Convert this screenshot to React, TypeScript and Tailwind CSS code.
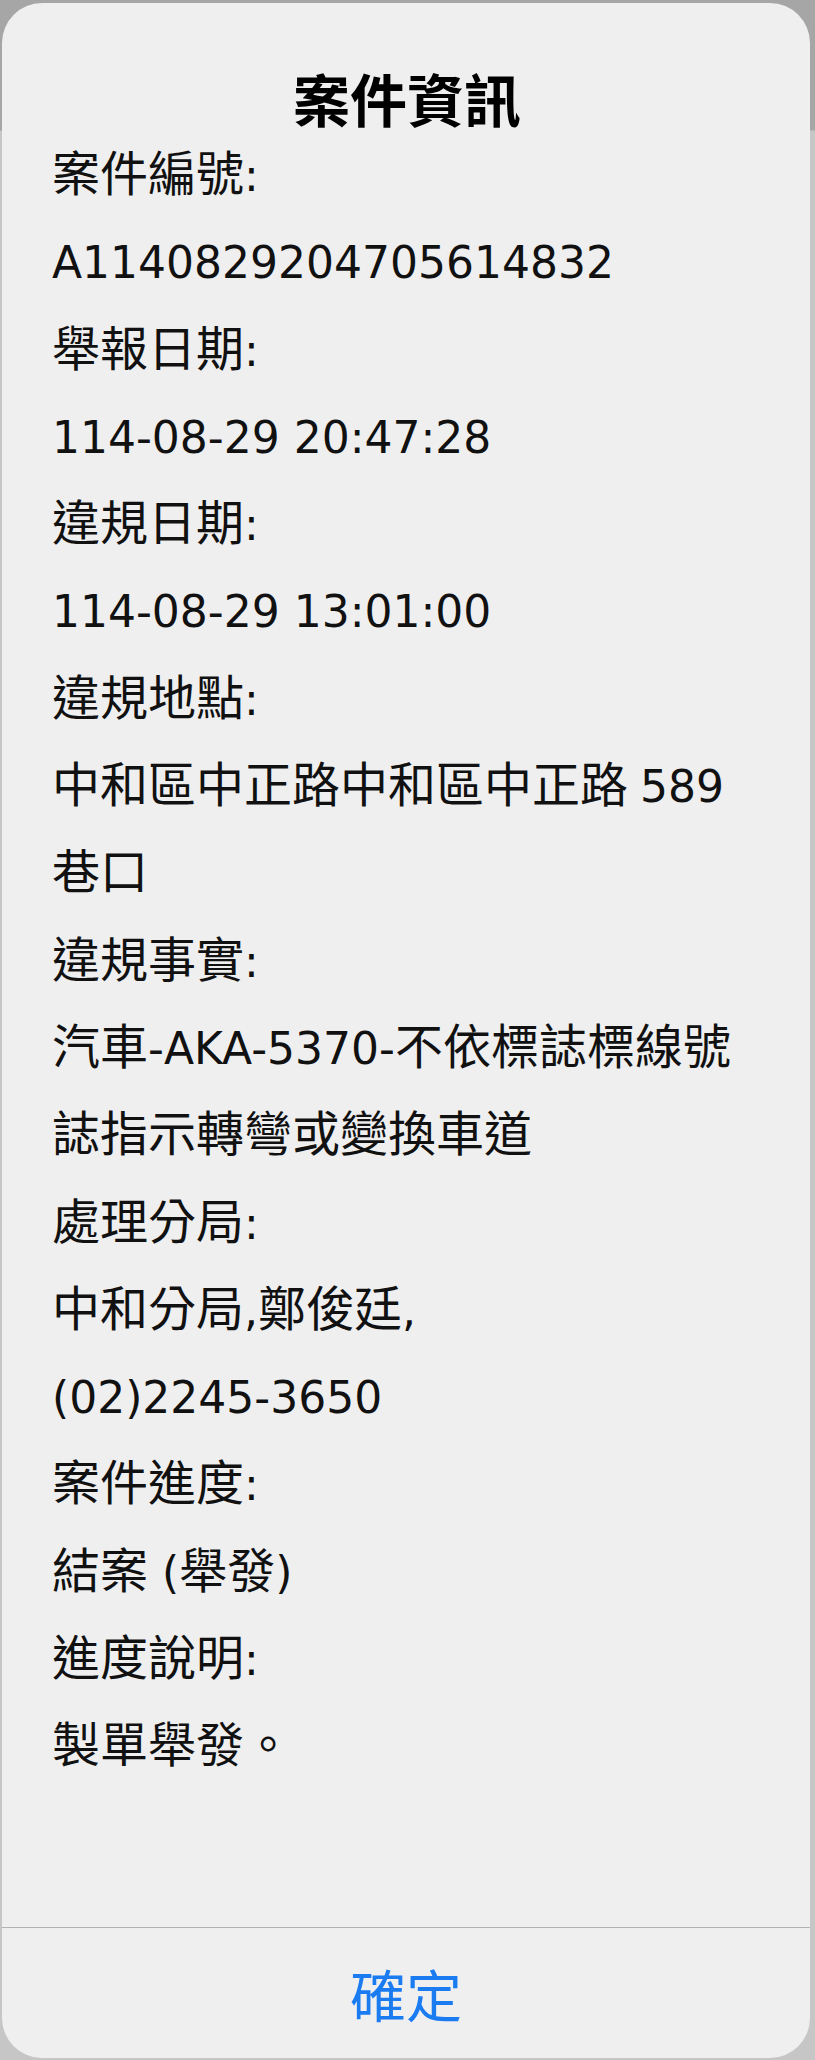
import React from 'react';

const lines: string[] = [
  '案件編號:',
  'A1140829204705614832',
  '舉報日期:',
  '114-08-29 20:47:28',
  '違規日期:',
  '114-08-29 13:01:00',
  '違規地點:',
  '中和區中正路中和區中正路589巷口',
  '違規事實:',
  '汽車-AKA-5370-不依標誌標線號誌指示轉彎或變換車道',
  '處理分局:',
  '中和分局,鄭俊廷,(02)2245-3650',
  '案件進度:',
  '結案 (舉發)',
  '進度說明:',
  '製單舉發。',
];

const cjk = { fontFamily: '"Noto Sans CJK TC", sans-serif' };
const latin = { fontFamily: '"DejaVu Sans", "Noto Sans CJK TC", sans-serif' };

// latin runs are a touch smaller than the CJK glyphs, like the iOS system font
function Line({ text }: { text: string }) {
  const parts = text.split(/(,|[\x20-\x2B\x2D-\x7E]+)/).filter(Boolean);
  return (
    <p>
      {parts.map((p, i) => {
        if (!/^[\x20-\x7E]+$/.test(p)) return <span key={i}>{p}</span>;
        const gap = i > 0 && /^[A-Za-z0-9]/.test(p) && !/[\x20-\x7E]$/.test(parts[i - 1]);
        return (
          <span
            key={i}
            className={
              gap
                ? 'text-[44px] leading-[0px] whitespace-nowrap ml-[12px]'
                : 'text-[44px] leading-[0px] whitespace-nowrap'
            }
            style={latin}
          >
            {p}
          </span>
        );
      })}
    </p>
  );
}

export default function App() {
  return (
    <div className="w-[815px] h-[2060px] overflow-hidden bg-[linear-gradient(to_bottom,#a6a6a6_0px,#a6a6a6_130px,#c6c6c6_131px,#c6c6c6_100%)] pt-[3px] pl-[2px]">
      <div className="w-[808px] h-[2055px] rounded-[40px] bg-[#efeff0] flex flex-col">
        <div className="pt-[68px] pl-[50px] flex flex-col">
          <h1 className="text-center text-[57px] leading-[52px] font-bold text-black pr-[48px]" style={cjk}>
            案件資訊
          </h1>
          <div className="mt-[4px] w-[686px] text-[48px] leading-[87.3px] text-[#111]" style={cjk}>
            {lines.map((l, i) => (
              <Line key={i} text={l} />
            ))}
          </div>
        </div>
        <div className="flex-1" />
        <div className="h-px bg-[#b3b3b3]" />
        <button className="h-[130px] flex items-center justify-center text-[56px] text-[#1b7cf2]" style={cjk}>
          確定
        </button>
      </div>
    </div>
  );
}
